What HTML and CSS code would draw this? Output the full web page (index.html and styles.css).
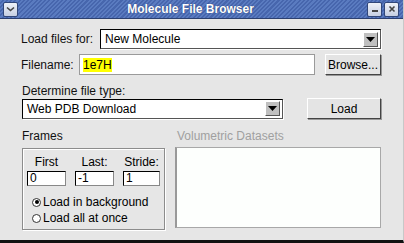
FILE: index.html
```html
<!DOCTYPE html>
<html>
<head>
<meta charset="utf-8">
<link rel="stylesheet" href="styles.css">
</head>
<body>
<div class="window">
  <div class="titlebar">
    <div class="tbtn"><svg width="9" height="6" viewBox="0 0 9 6"><path d="M1 1.5 L4.5 4.5 L8 1.5" fill="none" stroke="#444" stroke-width="1.6"/></svg></div>
    <div class="title">Molecule File Browser</div>
    <div class="tbtns">
      <div class="tbtn"><svg width="8" height="8" viewBox="0 0 8 8"><rect x="1" y="5" width="6" height="2" fill="#444"/></svg></div>
      <div class="tbtn"><svg width="8" height="8" viewBox="0 0 8 8"><path d="M1.5 1.5 L6.5 6.5 M6.5 1.5 L1.5 6.5" stroke="#444" stroke-width="1.6"/></svg></div>
    </div>
  </div>
  <div class="content">
    <div class="row row1">
      <span class="lbl">Load files for:</span>
      <div class="combo wide">
        <span class="val">New Molecule</span>
        <span class="arrow"><svg width="9" height="5" viewBox="0 0 9 5"><path d="M0 0 H9 L4.5 5 Z" fill="#000"/></svg></span>
      </div>
    </div>
    <div class="row row2">
      <span class="lbl">Filename:</span>
      <div class="entry"><span class="sel">1e7H</span></div>
      <div class="btn browse">Browse...</div>
    </div>
    <div class="lbl section">Determine file type:</div>
    <div class="row row3">
      <div class="combo type">
        <span class="val">Web PDB Download</span>
        <span class="arrow"><svg width="9" height="5" viewBox="0 0 9 5"><path d="M0 0 H9 L4.5 5 Z" fill="#000"/></svg></span>
      </div>
      <div class="btn load">Load</div>
    </div>
    <div class="bottom">
      <div class="col frames-col">
        <div class="lbl head">Frames</div>
        <div class="framebox">
          <div class="fields">
            <div class="field"><span class="flbl">First</span><div class="small-entry">0</div></div>
            <div class="field"><span class="flbl">Last:</span><div class="small-entry">-1</div></div>
            <div class="field"><span class="flbl">Stride:</span><div class="small-entry s">1</div></div>
          </div>
          <div class="radio"><span class="dot on"></span>Load in background</div>
          <div class="radio"><span class="dot"></span>Load all at once</div>
        </div>
      </div>
      <div class="col vol-col">
        <div class="lbl head disabled">Volumetric Datasets</div>
        <div class="listbox"></div>
      </div>
    </div>
  </div>
</div>
</body>
</html>
```
FILE: styles.css
```css
* { box-sizing: border-box; }
html, body { margin: 0; padding: 0; }
body {
  width: 404px;
  height: 243px;
  overflow: hidden;
  font-family: "Liberation Sans", Arial, sans-serif;
  font-size: 12px;
  color: #000;
  background: #e6e6e6;
}
.window {
  width: 404px;
  height: 243px;
  background: #e6e6e6;
  border-bottom: 3px solid #111;
  border-right: 1px solid #c8c8c8;
  display: flex;
  flex-direction: column;
}
.titlebar {
  height: 19px;
  flex: none;
  display: flex;
  align-items: center;
  padding: 0 4px 0 3px;
  background: repeating-linear-gradient(135deg, #5a7bc0 0 1.5px, #4766ad 1.5px 3px);
  border-bottom: 1px solid #2c4070;
}
.title {
  flex: 1;
  text-align: center;
  color: #fff;
  font-weight: bold;
  font-size: 12px;
  padding-right: 4px;
  text-shadow: 0 0 1px #1c2c60;
}
.tbtns { display: flex; gap: 2px; }
.tbtn {
  width: 15px;
  height: 15px;
  border: 1px solid #31477a;
  border-radius: 2px;
  background: linear-gradient(#eef1f8, #c6cfe2);
  display: flex;
  align-items: center;
  justify-content: center;
}
.content {
  padding: 10px 22px 0 21px;
  display: flex;
  flex-direction: column;
}
.row { display: flex; align-items: center; }
.lbl { white-space: nowrap; line-height: 14px; color: #111; }
.row1 { height: 20px; }
.row1 .lbl { width: 79px; }
.combo {
  height: 20px;
  background: #fff;
  border: 1px solid #000;
  border-right-color: #555;
  border-bottom-color: #555;
  box-shadow: 1px 1px 0 #fff;
  display: flex;
  align-items: center;
  justify-content: space-between;
  padding: 0 2px 0 4px;
}
.combo.wide { flex: 1; }
.arrow {
  width: 15px;
  height: 15px;
  background: #c0c0c0;
  border: 1px solid #fff;
  border-right-color: #555;
  border-bottom-color: #555;
  display: flex;
  align-items: center;
  justify-content: center;
}
.row2 { height: 21px; margin-top: 5px; }
.row2 .lbl { width: 58px; }
.entry {
  width: 236px;
  height: 21px;
  background: #fff;
  border: 1px solid #9a9a9a;
  display: flex;
  align-items: center;
  padding-left: 3px;
}
.sel { background: #ffff00; }
.btn {
  height: 21px;
  background: #e4e4e4;
  border: 1px solid #fff;
  border-right-color: #444;
  border-bottom-color: #444;
  box-shadow: 1px 1px 0 #999;
  display: flex;
  align-items: center;
  justify-content: center;
}
.browse { width: 56px; margin-left: 10px; }
.section { margin-top: 9px; padding-left: 1px; }
.row3 { height: 21px; justify-content: space-between; padding-left: 1px; }
.combo.type { width: 261px; }
.load { width: 74px; }
.bottom {
  margin-top: 10px;
  display: flex;
  gap: 10px;
  padding-left: 1px;
}
.head { height: 19px; }
.disabled { color: #a0a0a0; padding-left: 2px; }
.framebox {
  width: 143px;
  height: 82px;
  border: 1px solid #8c8c8c;
  box-shadow: inset 1px 1px 0 #fff, 1px 1px 0 #fff;
  padding: 6px 4px 0 4px;
}
.fields { display: flex; gap: 9px; }
.field { display: flex; flex-direction: column; align-items: center; }
.flbl { line-height: 14px; margin-bottom: 2px; }
.small-entry {
  width: 39px;
  height: 15px;
  background: #fff;
  border: 1px solid #000;
  border-right-color: #888;
  border-bottom-color: #888;
  line-height: 13px;
  padding-left: 2px;
  font-size: 12px;
}
.small-entry.s { width: 37px; }
.radio {
  display: flex;
  align-items: center;
  height: 16px;
  padding-left: 5px;
  white-space: nowrap;
}
.fields + .radio { margin-top: 8px; }
.dot {
  width: 9px;
  height: 9px;
  border-radius: 50%;
  border: 1px solid #333;
  background: #fff;
  margin-right: 2px;
  position: relative;
}
.dot.on::after {
  content: "";
  position: absolute;
  left: 1.5px;
  top: 1.5px;
  width: 4px;
  height: 4px;
  border-radius: 50%;
  background: #000;
}
.vol-col { flex: 1; }
.listbox {
  height: 81px;
  margin-top: -1px;
  background: #fdfffd;
  border: 1px solid #a8a8a8;
  border-left: 2px solid #999;
}
```
